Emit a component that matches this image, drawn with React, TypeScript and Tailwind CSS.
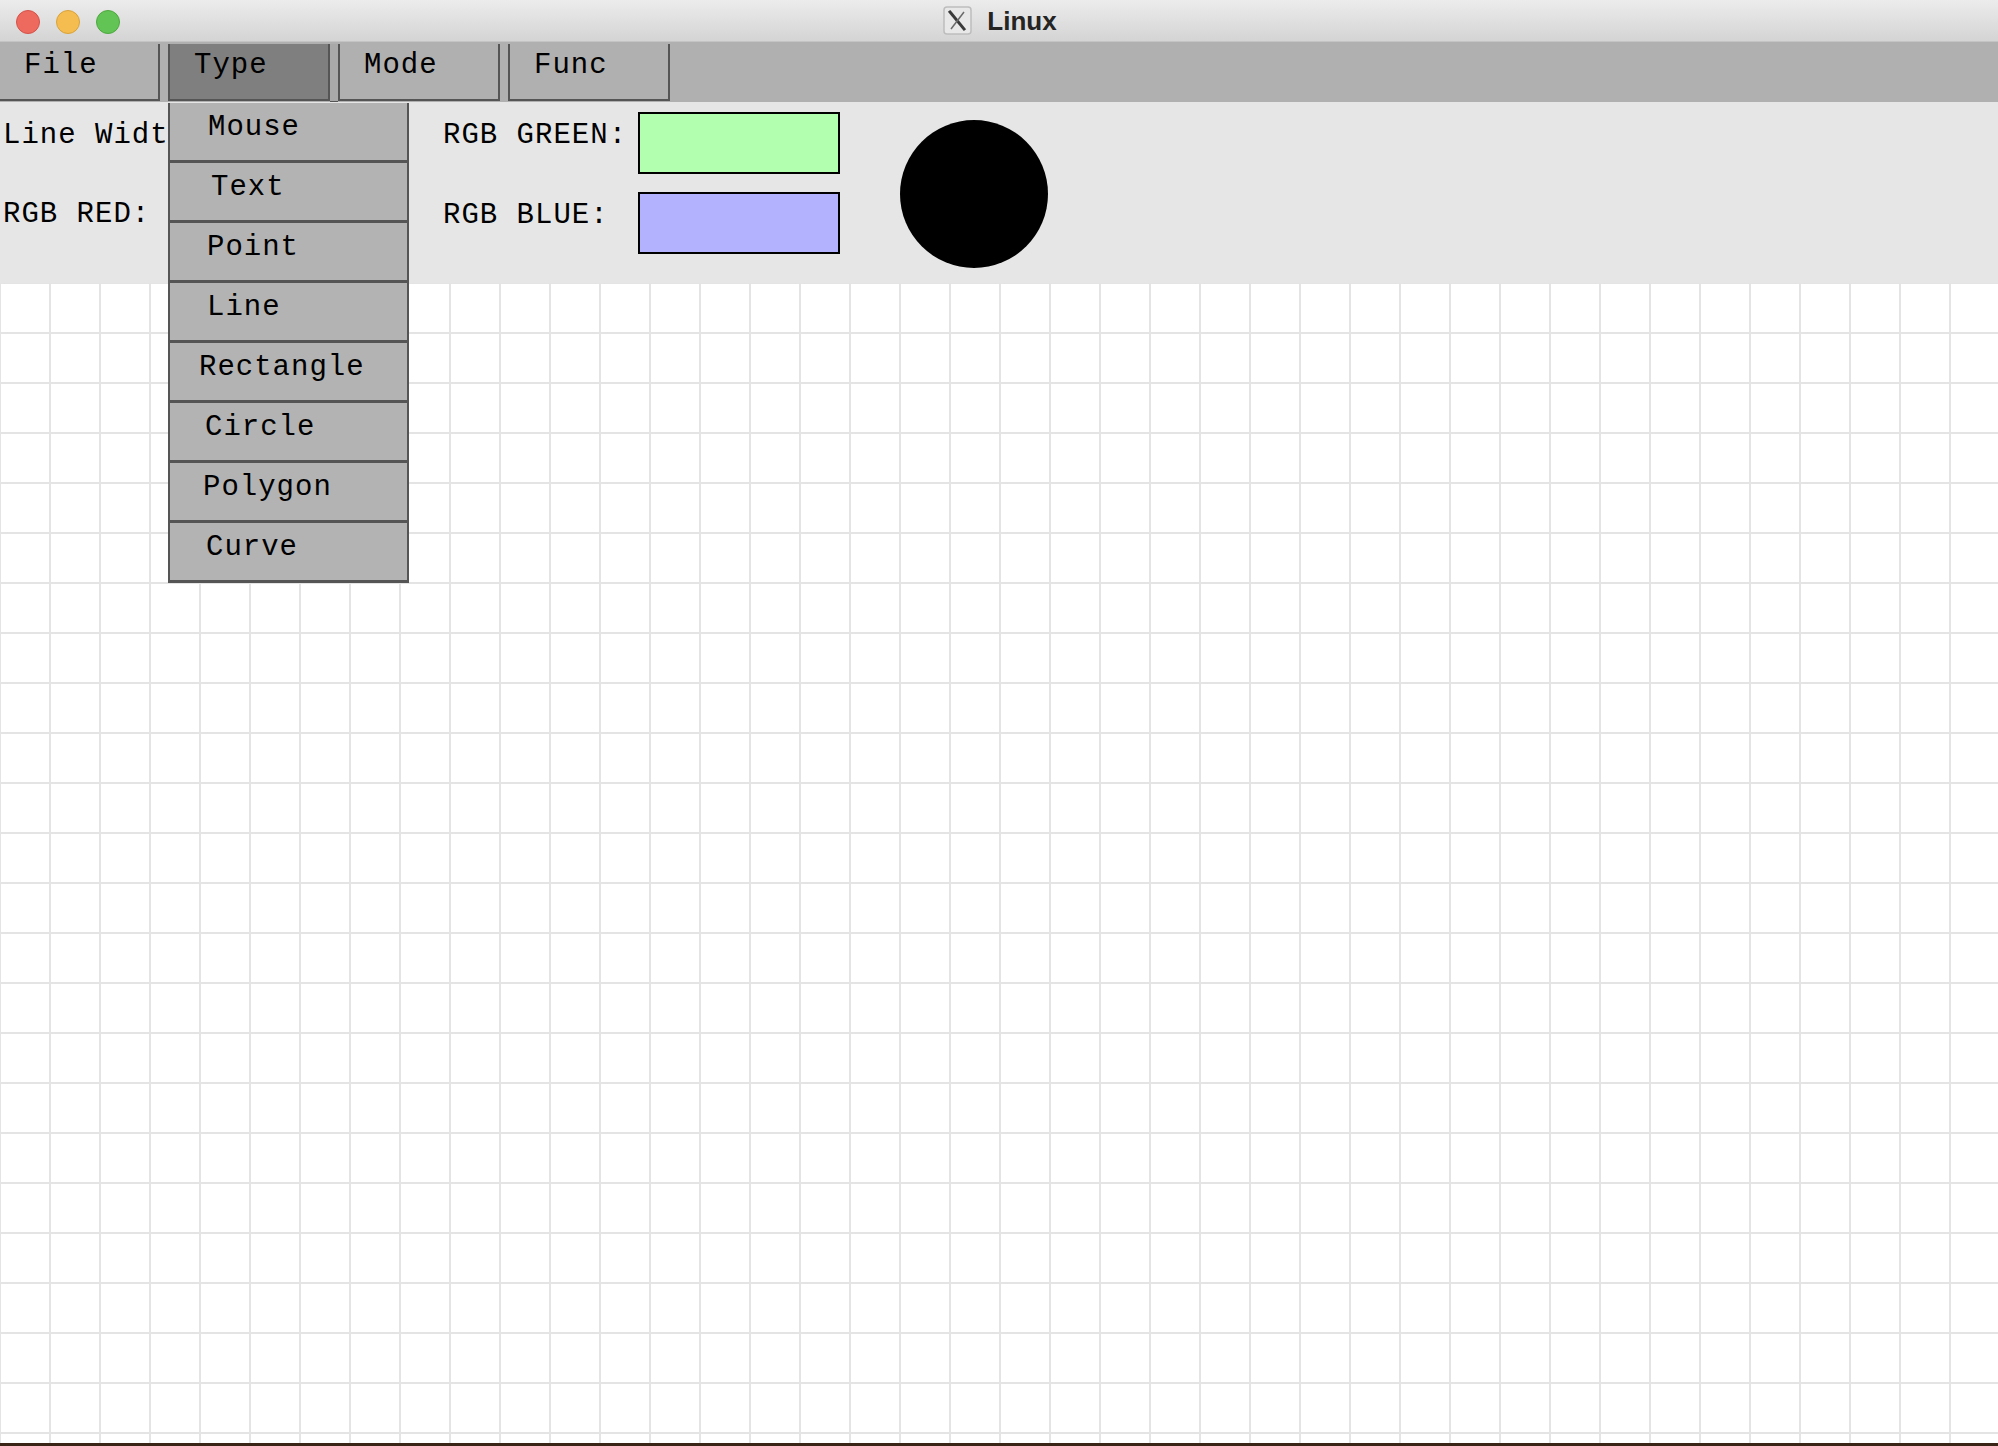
import React from "react";

const mono = "font-['Liberation_Mono',monospace] text-[29px] leading-[29px] tracking-[1px] text-black whitespace-nowrap";

function TitleBar() {
  return (
    <div className="relative h-[42px] shrink-0 bg-[linear-gradient(to_bottom,#ececec,#d4d4d4)] border-b border-[#c4c4c4] flex items-center justify-center">
      <div className="absolute left-[16px] top-[10px] flex gap-[16px]">
        <div className="w-[24px] h-[24px] rounded-full bg-[#ee6a5e] border border-[#d5524a]" />
        <div className="w-[24px] h-[24px] rounded-full bg-[#f5bd4f] border border-[#d9a23b]" />
        <div className="w-[24px] h-[24px] rounded-full bg-[#61c454] border border-[#4ea83f]" />
      </div>
      <div className="flex items-center gap-[15px] pl-[2px]">
        <svg width="29" height="29" viewBox="0 0 29 29">
          <rect x="1" y="1" width="27" height="27" rx="3" fill="#e8e8e8" stroke="#bdbdbd" strokeWidth="1.5" />
          <path d="M7 6 L21 23" stroke="#3a3a3a" strokeWidth="3" strokeLinecap="square" />
          <path d="M21 6 L8 23" stroke="#6a6a6a" strokeWidth="1.5" />
        </svg>
        <span className="font-['Liberation_Sans',Arial,sans-serif] font-bold text-[26px] leading-none text-[#242424]">
          Linux
        </span>
      </div>
    </div>
  );
}

function MenuButton({ label, pressed, first }: { label: string; pressed?: boolean; first?: boolean }) {
  return (
    <div
      className={
        "h-[57px] border-r-2 border-b-2 border-[#555555] pt-[7px] " +
        (first ? "w-[160px] pl-[24px] " : "w-[162px] border-l-2 pl-[24px] ") +
        (pressed ? "bg-[#7f7f7f]" : "bg-[#b0b0b0]")
      }
    >
      <span className={mono}>{label}</span>
    </div>
  );
}

function MenuBar() {
  return (
    <div className="h-[60px] shrink-0 bg-[#b0b0b0] pt-[2px] flex">
      <MenuButton label="File" first />
      <div className="w-[8px]" />
      <MenuButton label="Type" pressed />
      <div className="w-[8px] h-[59px] bg-[#a9a9a9] border-b-2 border-[#555555]" />
      <MenuButton label="Mode" />
      <div className="w-[8px]" />
      <MenuButton label="Func" />
    </div>
  );
}

const items: { label: string; pl: string }[] = [
  { label: "Mouse", pl: "pl-[38px]" },
  { label: "Text", pl: "pl-[41px]" },
  { label: "Point", pl: "pl-[37px]" },
  { label: "Line", pl: "pl-[37px]" },
  { label: "Rectangle", pl: "pl-[29px]" },
  { label: "Circle", pl: "pl-[35px]" },
  { label: "Polygon", pl: "pl-[33px]" },
  { label: "Curve", pl: "pl-[36px]" },
];

function Dropdown() {
  return (
    <div className="absolute left-[168px] top-[103px] w-[241px] flex flex-col z-10">
      {items.map((it) => (
        <div
          key={it.label}
          className={"h-[60px] bg-[#b3b3b3] border-l-2 border-r-2 border-b-[3px] border-[#555555] pt-[10px] " + it.pl}
        >
          <span className={mono}>{it.label}</span>
        </div>
      ))}
    </div>
  );
}

function Panel() {
  return (
    <div className="h-[181px] shrink-0 bg-[#e6e6e6] flex">
      <div className="w-[443px] shrink-0 pl-[3px] pt-[19px] flex flex-col gap-[50px] overflow-hidden">
        <div className="h-[29px] flex items-start">
          <span className={mono + " w-[200px] shrink-0"}>Line Width:</span>
          <div className="w-[200px] h-[29px] shrink-0 border-2 border-black bg-white" />
        </div>
        <div className="h-[29px] flex items-start">
          <span className={mono + " w-[200px] shrink-0"}>RGB RED:</span>
          <div className="w-[200px] h-[29px] shrink-0 border-2 border-black bg-[#ffb3b3]" />
        </div>
      </div>
      <div className="pt-[10px] flex flex-col gap-[18px]">
        <div className="flex items-start">
          <span className={mono + " w-[195px] mt-[9px]"}>RGB GREEN:</span>
          <div className="w-[202px] h-[62px] border-2 border-black bg-[#b3ffb0]" />
        </div>
        <div className="flex items-start">
          <span className={mono + " w-[195px] mt-[9px]"}>RGB BLUE:</span>
          <div className="w-[202px] h-[62px] border-2 border-black bg-[#b2b2ff]" />
        </div>
      </div>
      <div className="ml-[60px] mt-[18px] w-[148px] h-[148px] rounded-full bg-black" />
    </div>
  );
}

function Canvas() {
  return (
    <div className="flex-1 bg-white bg-[linear-gradient(to_right,#e4e4e4_0_2px,transparent_2px),linear-gradient(to_bottom,#e4e4e4_0_2px,transparent_2px)] bg-[length:50px_50px] bg-[position:49px_49px]" />
  );
}

export default function App() {
  return (
    <div className="relative w-[1998px] h-[1446px] overflow-hidden flex flex-col bg-white">
      <TitleBar />
      <MenuBar />
      <Panel />
      <Canvas />
      <div className="h-[3px] shrink-0 bg-[#3a2416]" />
      <Dropdown />
    </div>
  );
}
